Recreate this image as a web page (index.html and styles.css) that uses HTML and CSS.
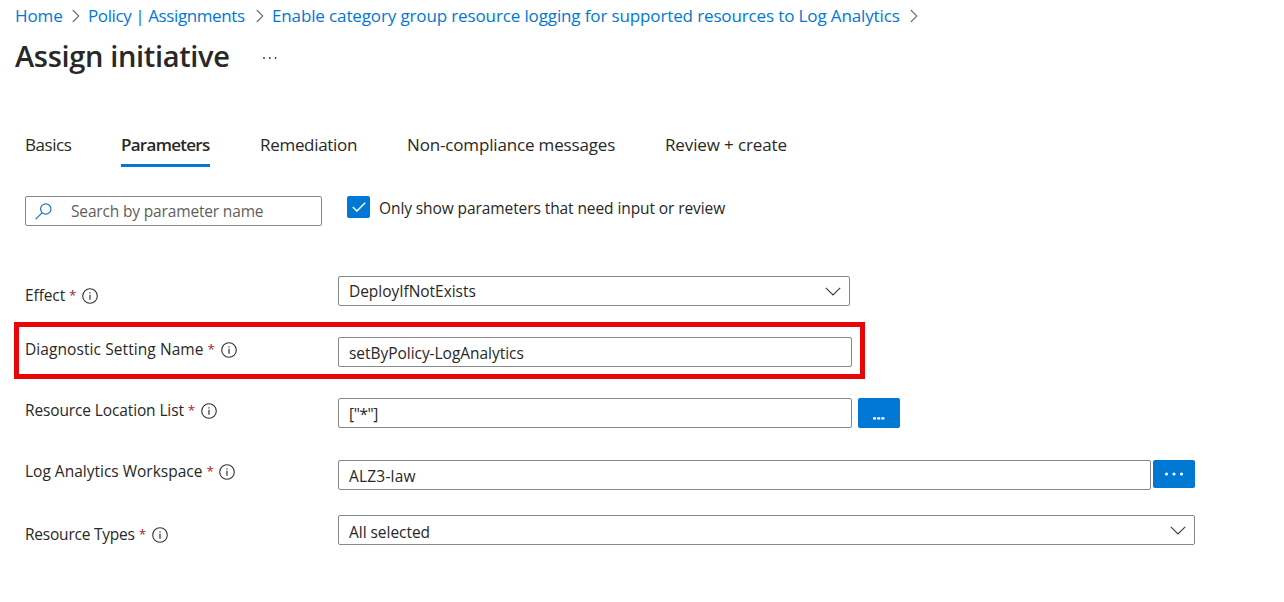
FILE: index.html
```html
<!DOCTYPE html>
<html lang="en">
<head>
<meta charset="utf-8">
<title>Assign initiative</title>
<link rel="stylesheet" href="styles.css">
</head>
<body>
<svg class="defs" width="0" height="0" aria-hidden="true">
  <symbol id="info" viewBox="0 0 16 16"><circle cx="8" cy="8" r="7.3" fill="none" stroke="#323130" stroke-width="1.1"/><path d="M8 6.8v5M8 4.2v1.3" fill="none" stroke="#323130" stroke-width="1.2"/></symbol>
  <symbol id="right" viewBox="0 0 8 14"><path d="M.8 1l6 6-6 6" fill="none" stroke="#706e6c" stroke-width="1.1"/></symbol>
  <symbol id="down" viewBox="0 0 16 9"><path d="M.8.8L8 8 15.2.8" fill="none" stroke="#3b3a39" stroke-width="1.1"/></symbol>
</svg>
<nav class="crumbs">
  <a class="crumb-home">Home</a><svg class="sep"><use href="#right"/></svg>
  <a class="crumb-policy">Policy | Assignments</a><svg class="sep"><use href="#right"/></svg>
  <a class="crumb-item">Enable category group resource logging for supported resources to Log Analytics</a><svg class="sep"><use href="#right"/></svg>
</nav>
<header class="title-row">
  <h1>Assign initiative</h1>
  <svg class="more" viewBox="0 0 16 4" fill="#323130"><circle cx="2" cy="2" r=".9"/><circle cx="7.8" cy="2" r=".9"/><circle cx="13.6" cy="2" r=".9"/></svg>
</header>
<div class="tabs">
  <div class="tab tab-basics">Basics</div>
  <div class="tab tab-params active">Parameters</div>
  <div class="tab tab-remed">Remediation</div>
  <div class="tab tab-msgs">Non-compliance messages</div>
  <div class="tab tab-review">Review + create</div>
</div>
<div class="filters">
  <div class="search">
    <svg class="magnifier" viewBox="0 0 17 17" fill="none" stroke="#1c74c9" stroke-width="1.2"><circle cx="10.8" cy="6" r="5.2"/><path d="M7 9.8L.7 16.2"/></svg>
    <span>Search by parameter name</span>
  </div>
  <div class="checkbox"><svg viewBox="0 0 14 10" fill="none" stroke="#fff" stroke-width="1.4"><path d="M.8 5l4.1 4.1L13.2.8"/></svg></div>
  <span class="check-label">Only show parameters that need input or review</span>
</div>
<main class="form">
  <div class="row row-effect">
    <div class="label"><span>Effect</span><b>*</b><svg class="info"><use href="#info"/></svg></div>
    <div class="field select"><span>DeployIfNotExists</span><svg class="caret"><use href="#down"/></svg></div>
  </div>
  <div class="row row-name">
    <div class="label"><span>Diagnostic Setting Name</span><b>*</b><svg class="info"><use href="#info"/></svg></div>
    <div class="field"><span>setByPolicy-LogAnalytics</span></div>
  </div>
  <div class="row row-location">
    <div class="label"><span>Resource Location List</span><b>*</b><svg class="info"><use href="#info"/></svg></div>
    <div class="field"><span>["*"]</span></div>
    <div class="button"><svg class="dots-square" viewBox="0 0 12 3" fill="#fff"><path d="M0 .3h3v2.2H0zM4.2.3h3v2.2h-3zM8.4.3h3v2.2h-3z"/></svg></div>
  </div>
  <div class="row row-workspace">
    <div class="label"><span>Log Analytics Workspace</span><b>*</b><svg class="info"><use href="#info"/></svg></div>
    <div class="field"><span>ALZ3-law</span></div>
    <div class="button"><svg class="dots-round" viewBox="0 0 20 4" fill="#fff"><circle cx="2.5" cy="2" r="1.6"/><circle cx="10" cy="2" r="1.6"/><circle cx="17.5" cy="2" r="1.6"/></svg></div>
  </div>
  <div class="row row-types">
    <div class="label"><span>Resource Types</span><b>*</b><svg class="info"><use href="#info"/></svg></div>
    <div class="field select"><span>All selected</span><svg class="caret"><use href="#down"/></svg></div>
  </div>
</main>
</body>
</html>
```
FILE: styles.css
```css
* { box-sizing: border-box; }
body { margin: 0; background: #fff; color: #292827; font-family: "Open Sans", "Noto Sans", sans-serif; font-size: 15.5px; white-space: nowrap; overflow: hidden; }
svg { display: block; flex: none; }
.defs { position: absolute; }

.crumbs { display: flex; align-items: center; height: 32px; padding-left: 15px; font-size: 17px; color: #0078d4; }
.crumbs a { flex: none; padding-bottom: 2px; }
.sep { width: 8px; height: 14px; margin-right: 8px; }
.crumb-home { width: 57px; letter-spacing: -.1px; }
.crumb-policy { width: 168px; letter-spacing: -.4px; }
.crumb-item { width: 638px; letter-spacing: -.13px; }

.title-row { display: flex; align-items: center; height: 50px; padding-left: 15px; }
h1 { width: 247px; margin: 0; font-size: 29px; line-height: 48px; padding-bottom: 2px; font-weight: 600; letter-spacing: -.33px; }
.more { width: 16px; height: 4px; margin-top: 2px; }

.tabs { display: flex; height: 43px; margin: 42px 0 0 25px; font-size: 17px; line-height: 41px; }
.tab { flex: none; }
.tab-basics { width: 46px; margin-right: 50px; letter-spacing: -.45px; }
.tab-params { width: 89px; margin-right: 50px; letter-spacing: -.72px; }
.tab-remed { width: 97px; margin-right: 50px; letter-spacing: -.3px; }
.tab-msgs { width: 208px; margin-right: 50px; letter-spacing: -.16px; }
.tab-review { letter-spacing: -.12px; }
.active { font-weight: 600; border-bottom: 3px solid #0078d4; }

.filters { display: flex; height: 30px; margin: 29px 0 0 25px; }
.search { display: flex; align-items: center; width: 297px; border: 1px solid #8a8886; border-radius: 2px; padding-left: 9px; color: #605e5c; letter-spacing: -.16px; }
.magnifier { width: 17px; height: 17px; margin-right: 19px; }
.checkbox { display: grid; place-items: center; width: 23px; height: 22px; margin: 0 9px 0 25px; border-radius: 2px; background: #0078d4; }
.checkbox svg { width: 14px; height: 10px; }
.check-label { line-height: 25px; letter-spacing: -.09px; }

.form { padding: 50px 0 0 14px; }
.row { display: flex; padding-left: 11px; }
.label { display: flex; flex: none; align-items: center; width: 313px; height: 30px; }
.label b { width: 7px; margin-left: 4px; font-size: 13.5px; font-weight: 400; color: #a4262c; }
.info { width: 16px; height: 16px; margin: 2px 0 0 6px; }
.field { display: flex; flex: none; align-items: center; width: 514px; height: 30px; padding-left: 10px; border: 1px solid #8a8886; border-radius: 2px; }
.field span { flex: 1; letter-spacing: -.04px; }
.caret { width: 16px; height: 9px; margin-right: 8px; }
.row-effect .label { padding-top: 7px; letter-spacing: -.1px; }
.row-effect .field { width: 512px; }
.row-name { width: 851px; height: 57px; margin-top: 16px; padding: 10px 0 0 6px; border: 5px solid #ea0606; }
.row-name .label { height: 23px; letter-spacing: .08px; }
.row-name .field, .row-location .field, .row-workspace .field { padding-top: 2px; }
.row-location { margin-top: 19px; }
.row-location .label { height: 23px; letter-spacing: -.13px; }
.row-location .field span { letter-spacing: -.4px; }
.button { display: grid; place-items: center; width: 42px; height: 30px; margin-left: 6px; border-radius: 2px; background: #0078d4; }
.dots-square { width: 12px; height: 3px; margin-top: 11px; }
.row-workspace { margin-top: 32px; }
.row-workspace .label { height: 22px; letter-spacing: 0; }
.row-workspace .field { width: 813px; }
.row-workspace .field span { letter-spacing: .2px; }
.row-workspace .button { height: 28px; margin-left: 2px; }
.dots-round { width: 20px; height: 4px; }
.row-types { margin-top: 25px; }
.row-types .label { padding-top: 7px; letter-spacing: -.22px; }
.row-types .field { width: 857px; }
.row-types .field span { padding-top: 3px; }
```
